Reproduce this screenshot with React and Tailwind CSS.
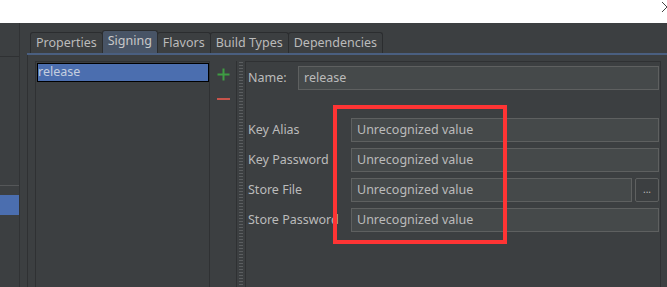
import React from 'react';

const fields = [
  { label: 'Key Alias', value: 'Unrecognized value' },
  { label: 'Key Password', value: 'Unrecognized value' },
  { label: 'Store File', value: 'Unrecognized value', browse: true },
  { label: 'Store Password', value: 'Unrecognized value' },
];

const tabs = ['Properties', 'Signing', 'Flavors', 'Build Types', 'Dependencies'];

export default function App() {
  return (
    <div
      className="w-[667px] h-[287px] bg-[#3c3f41] flex flex-col overflow-hidden text-[12.5px] text-[#bbbbbb]"
      style={{ fontFamily: '"Noto Sans", "Open Sans", sans-serif' }}
    >
      {/* title strip */}
      <div className="h-[23px] bg-white flex justify-end shrink-0">
        <svg width="12" height="12" viewBox="0 0 12 12" className="mt-[1px] -mr-[6px]">
          <path d="M1 1 L11 11 M11 1 L1 11" stroke="#444" strokeWidth="1" fill="none" />
        </svg>
      </div>

      <div className="flex flex-1 min-h-0">
        {/* left strip */}
        <div className="w-[20px] border-r border-[#313335] flex flex-col shrink-0">
          <div className="h-[34px] border-b border-[#2f3133]" />
          <div className="h-[128px]" />
          <div className="h-px bg-[#555759]" />
          <div className="h-[9px]" />
          <div className="h-[20px] bg-[#4b6eaf]" />
        </div>

        <div className="w-[7px] shrink-0" />

        {/* tabbed pane */}
        <div className="flex-1 flex flex-col min-w-0">
          <div className="flex items-end pl-[3px] pt-[7px] h-[30px] shrink-0">
            {tabs.map((t) => {
              const active = t === 'Signing';
              return (
                <div
                  key={t}
                  className={
                    active
                      ? 'h-[23px] px-[5px] -mr-px flex items-center bg-[#485466] border border-b-0 border-[#2b2d2f] rounded-t-[3px] text-[#c8c8c8] pb-[2px]'
                      : 'h-[21px] px-[5px] -mr-px flex items-center bg-[#3c3f41] border border-b-0 border-[#2b2d2f] rounded-t-[3px]'
                  }
                >
                  {t}
                </div>
              );
            })}
          </div>
          <div className="h-[2px] bg-[#4a5f80] shrink-0" />

          <div className="flex-1 flex border-l border-[#2f3133] min-h-0">
            <div className="w-[7px] shrink-0" />
            <div className="flex-1 flex pt-[6px] min-h-0">
              {/* list */}
              <div className="w-[175px] border border-b-0 border-[#2f3133] pt-px pl-px shrink-0">
                <div className="h-[19px] bg-[#4b6eaf] border border-black flex items-center leading-none text-[#c4cedf]">
                  release
                </div>
              </div>

              {/* toolbar */}
              <div className="w-[27px] border-r border-[#2f3133] flex flex-col items-center pt-[7px] shrink-0">
                <svg width="13" height="13" viewBox="0 0 13 13">
                  <path d="M6.5 0.5 V12.5 M0.5 6.5 H12.5" stroke="#3e9c43" strokeWidth="2" />
                </svg>
                <svg width="13" height="3" viewBox="0 0 13 3" className="mt-[17px]">
                  <rect x="0" y="0" width="13" height="2" fill="#c7544b" />
                </svg>
              </div>

              {/* splitter */}
              <div className="w-[8px] shrink-0 flex justify-center">
                <div className="w-[4px] bg-[radial-gradient(circle,#5b5e60_0.8px,transparent_1px)] bg-[length:2px_3px]" />
              </div>

              {/* right panel */}
              <div className="flex-1 border-l border-t border-r border-[#2f3133] relative">
                <div className="flex items-center h-[24px] mt-[4px] pl-[2px]">
                  <span className="w-[50px]">Name:</span>
                  <div className="w-[361px] h-[24px] bg-[#45494a] border border-[#5e6060] flex items-center px-[5px]">
                    release
                  </div>
                </div>

                <div className="flex flex-col gap-[6px] mt-[28px]">
                  {fields.map((f) => (
                    <div key={f.label} className="flex items-center h-[24px] pl-[2px]">
                      <span className="w-[103px]">{f.label}</span>
                      {f.browse ? (
                        <div className="flex gap-[3px]">
                          <div className="w-[281px] h-[24px] bg-[#45494a] border border-[#5e6060] flex items-center px-[5px]">
                            {f.value}
                          </div>
                          <div className="w-[24px] h-[24px] bg-[#3c3f41] border border-[#5e6060] rounded-[2px] flex items-center justify-center text-[10px] leading-none pb-[3px]">
                            ...
                          </div>
                        </div>
                      ) : (
                        <div className="w-[308px] h-[24px] bg-[#45494a] border border-[#5e6060] flex items-center px-[5px]">
                          {f.value}
                        </div>
                      )}
                    </div>
                  ))}
                </div>

                {/* annotation */}
                <div className="absolute left-[87px] top-[43px] w-[174px] h-[139px] border-[4px] border-[#ff3434] pointer-events-none" />
              </div>
              <div className="w-[6px] shrink-0" />
            </div>
          </div>
        </div>
      </div>
    </div>
  );
}
